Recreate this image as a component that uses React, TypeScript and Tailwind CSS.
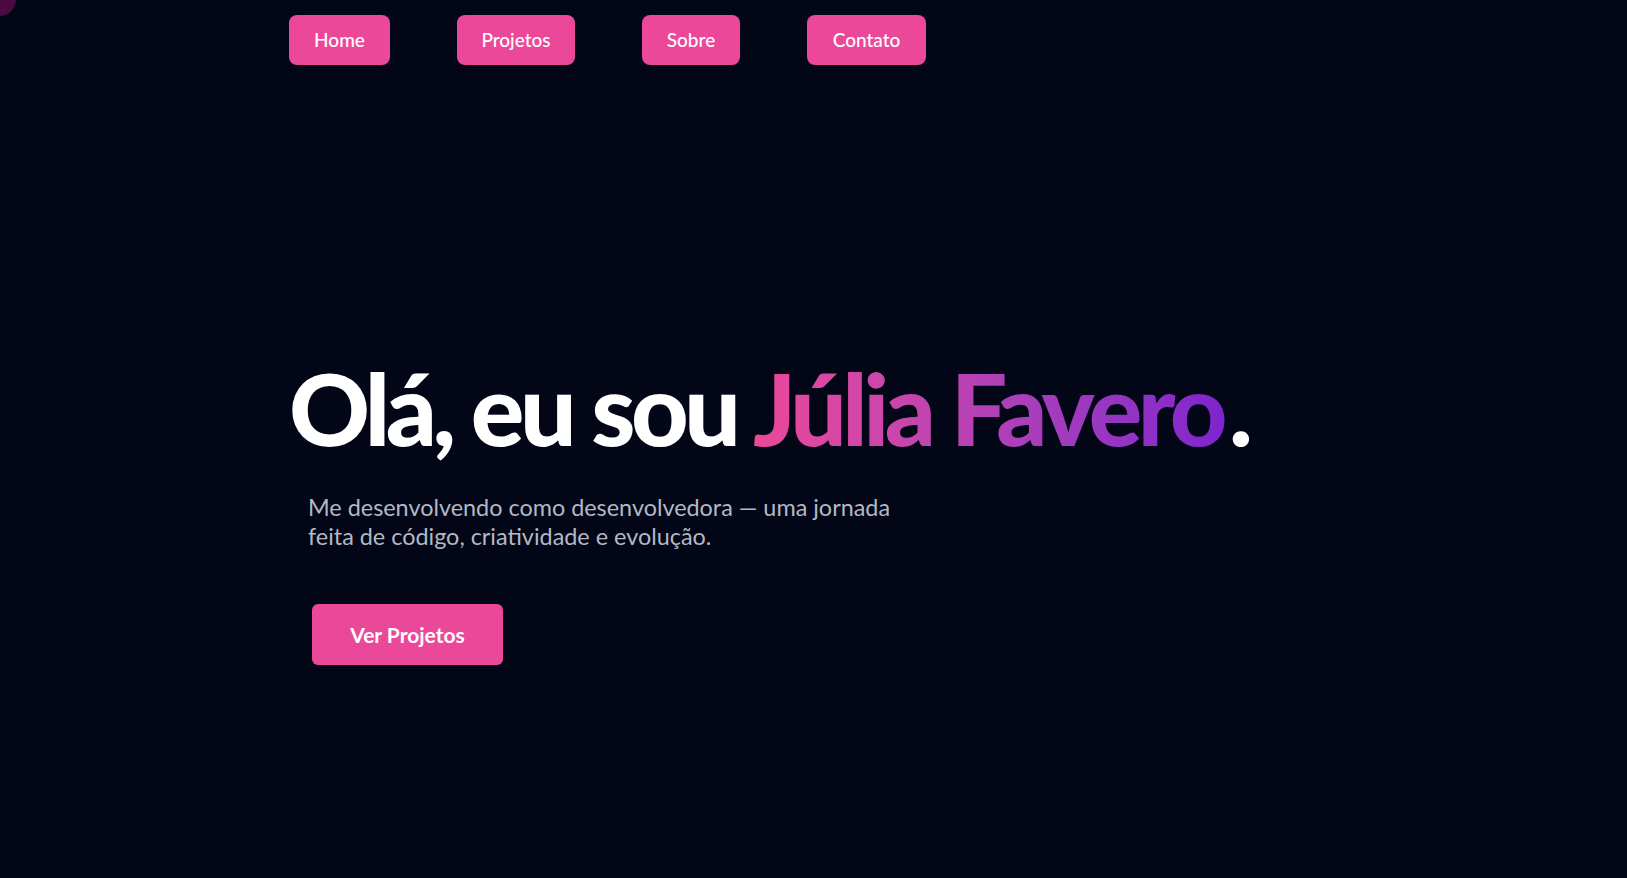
import React from "react";

const navItems = [
  { label: "Home", w: "w-[101px]" },
  { label: "Projetos", w: "w-[118px]" },
  { label: "Sobre", w: "w-[98px]" },
  { label: "Contato", w: "w-[119px]" },
];

export default function App() {
  return (
    <div
      className="relative min-h-[878px] w-full overflow-hidden bg-[#020617]"
      style={{ fontFamily: "Lato, 'Open Sans', sans-serif" }}
    >
      <div className="absolute -left-[17px] -top-[17px] h-[33px] w-[33px] rounded-full bg-[#4a0a42]" />

      <nav className="flex gap-[67px] pl-[289px] pt-[15px]">
        {navItems.map((item) => (
          <a
            key={item.label}
            href="#"
            className={`${item.w} flex h-[50px] items-center justify-center rounded-lg bg-[#ec4899] text-[19px] font-medium text-white`}
          >
            {item.label}
          </a>
        ))}
      </nav>

      <section className="flex flex-col pl-[289px] pt-[292px]">
        <h1 className="text-[100px] font-black leading-none tracking-[-0.045em] text-white whitespace-nowrap">
          Olá, eu sou{" "}
          <span className="bg-gradient-to-r from-[#ec4899] to-[#7e22ce] bg-clip-text text-transparent pr-[6px]">
            Júlia Favero
          </span>
          .
        </h1>
        <p className="ml-[19px] mt-[36px] max-w-[610px] text-[23.4px] leading-[29px] text-[#b3b8c4]">
          Me desenvolvendo como desenvolvedora — uma jornada feita de código, criatividade e evolução.
        </p>
        <div className="ml-[23px] mt-[53px]">
          <button className="flex h-[61px] w-[191px] items-center justify-center rounded-md bg-[#ec4899] text-[21px] font-bold text-white">
            Ver Projetos
          </button>
        </div>
      </section>
    </div>
  );
}
